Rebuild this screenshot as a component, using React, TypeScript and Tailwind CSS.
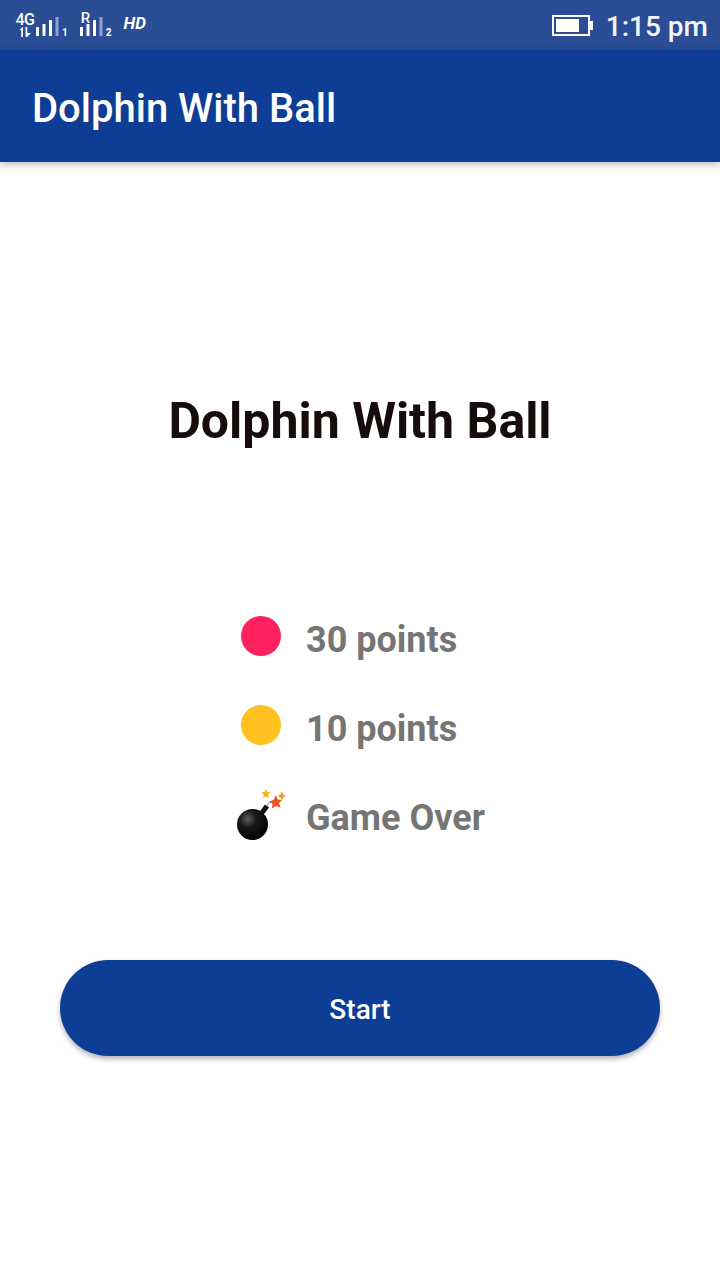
const Bars = () => (
	<svg width="23" height="19" viewBox="0 0 23 19" className="block">
		<rect x="0" y="10" width="3" height="9" rx="0.5" fill="#fff" />
		<rect x="6.5" y="7" width="3" height="12" rx="0.5" fill="#fff" />
		<rect x="13" y="3" width="3" height="16" rx="0.5" fill="#fff" />
		<rect x="19.5" y="0" width="3" height="19" fill="#8fa3cc" />
	</svg>
);

const Arrows = () => (
	<svg width="13" height="10" viewBox="0 0 13 10" className="block">
		<path d="M0.5 3 L3.5 0 L4 0 L4 10 L2.2 10 L2.2 3 Z" fill="#fff" />
		<path d="M6.5 0 L8.3 0 L8.3 6 L12 6 L8 10 L6.5 10 Z" fill="#fff" />
	</svg>
);

const Bomb = () => (
	<svg width="50" height="54" viewBox="0 0 50 54" className="block">
		<defs>
			<radialGradient id="ball" cx="0.35" cy="0.32" r="0.7">
				<stop offset="0" stopColor="#5e5e5e" />
				<stop offset="0.4" stopColor="#181818" />
				<stop offset="1" stopColor="#000" />
			</radialGradient>
		</defs>
		<path d="M25 27 L31 19" stroke="#111" strokeWidth="5" />
		<path d="M31 19 Q32 16 35 15" stroke="#999" strokeWidth="1.2" fill="none" />
		<circle cx="16.5" cy="37.5" r="15.5" fill="url(#ball)" />
		<path d="M40 8 L41.5 12.5 L46 13 L43 16 L44.5 20.5 L40 19 L36 21.5 L36.5 17 L33 14.5 L37.5 13 Z" fill="#f0541e" />
		<path d="M46 4 L47 7.5 L50 9 L47 10.5 L46 14 L44.5 10.5 L42 9 L44.5 7.5 Z" fill="#f7931e" />
		<path d="M30 1.5 L31.2 5 L34.5 5.5 L32.2 8 L33 11 L30 9.5 L27 11 L27.8 8 L25.5 5.5 L28.8 5 Z" fill="#fbb017" />
	</svg>
);

const Row = ({ icon, label }: { icon: React.ReactNode; label: string }) => (
	<div className="flex items-center h-[89px]">
		<div className="w-[50px] flex justify-center">{icon}</div>
		<span className="ml-5 mt-[8px] text-[36px] font-bold text-[#757575] leading-none">{label}</span>
	</div>
);

export default function App() {
	return (
		<div className="h-[1280px] bg-white flex flex-col overflow-hidden font-['Roboto',sans-serif]">
			<div className="h-[50px] bg-[#2a4d96] flex items-center justify-between text-white">
				<div className="flex items-end pl-4 pb-[13px] h-full">
					<div className="w-[18px] flex flex-col items-center">
						<span className="text-[16px] font-medium leading-[15px] tracking-[-0.5px]">4G</span>
						<Arrows />
					</div>
					<div className="ml-[2px] mb-[1px]">
						<Bars />
					</div>
					<span className="ml-[3px] text-[10px] font-bold leading-[8px]">1</span>
					<div className="ml-[12px] mb-[1px] relative">
						<span className="absolute left-[1px] -top-[6px] text-[15px] font-medium leading-none">R</span>
						<Bars />
					</div>
					<span className="ml-[3px] text-[10px] font-bold leading-[8px]">2</span>
					<span className="ml-[12px] mb-[5px] text-[17px] font-bold italic leading-none">HD</span>
				</div>
				<div className="flex items-center pr-3">
					<div className="w-[38px] h-[21px] border-2 border-white p-[2px]">
						<div className="w-[23px] h-full bg-white" />
					</div>
					<div className="w-[3px] h-[9px] bg-white" />
					<span className="ml-[13px] mt-[3px] text-[28px] font-medium text-[#f2f4f9]">1:15 pm</span>
				</div>
			</div>
			<div className="h-[112px] bg-[#0d3d94] flex items-center pl-8 pt-[5px] shadow-[0_2px_8px_rgba(0,0,0,0.3)] z-10">
				<span className="text-[40px] font-medium text-white">Dolphin With Ball</span>
			</div>
			<div className="flex flex-col items-center">
				<h1 className="mt-[227px] text-[50px] font-bold text-[#170c0c] leading-[64px]">Dolphin With Ball</h1>
				<div className="mt-[138px] w-[720px] pl-[236px] flex flex-col">
					<Row icon={<div className="w-10 h-10 rounded-full bg-[#ff215e]" />} label="30 points" />
					<Row icon={<div className="w-10 h-10 rounded-full bg-[#ffc11f]" />} label="10 points" />
					<Row icon={<Bomb />} label="Game Over" />
				</div>
				<button className="mt-[102px] w-[600px] h-24 pt-[3px] rounded-[48px] bg-[#0d3d94] text-white text-[28px] font-medium shadow-[0_3px_5px_rgba(0,0,0,0.3)]">
					Start
				</button>
			</div>
		</div>
	);
}
